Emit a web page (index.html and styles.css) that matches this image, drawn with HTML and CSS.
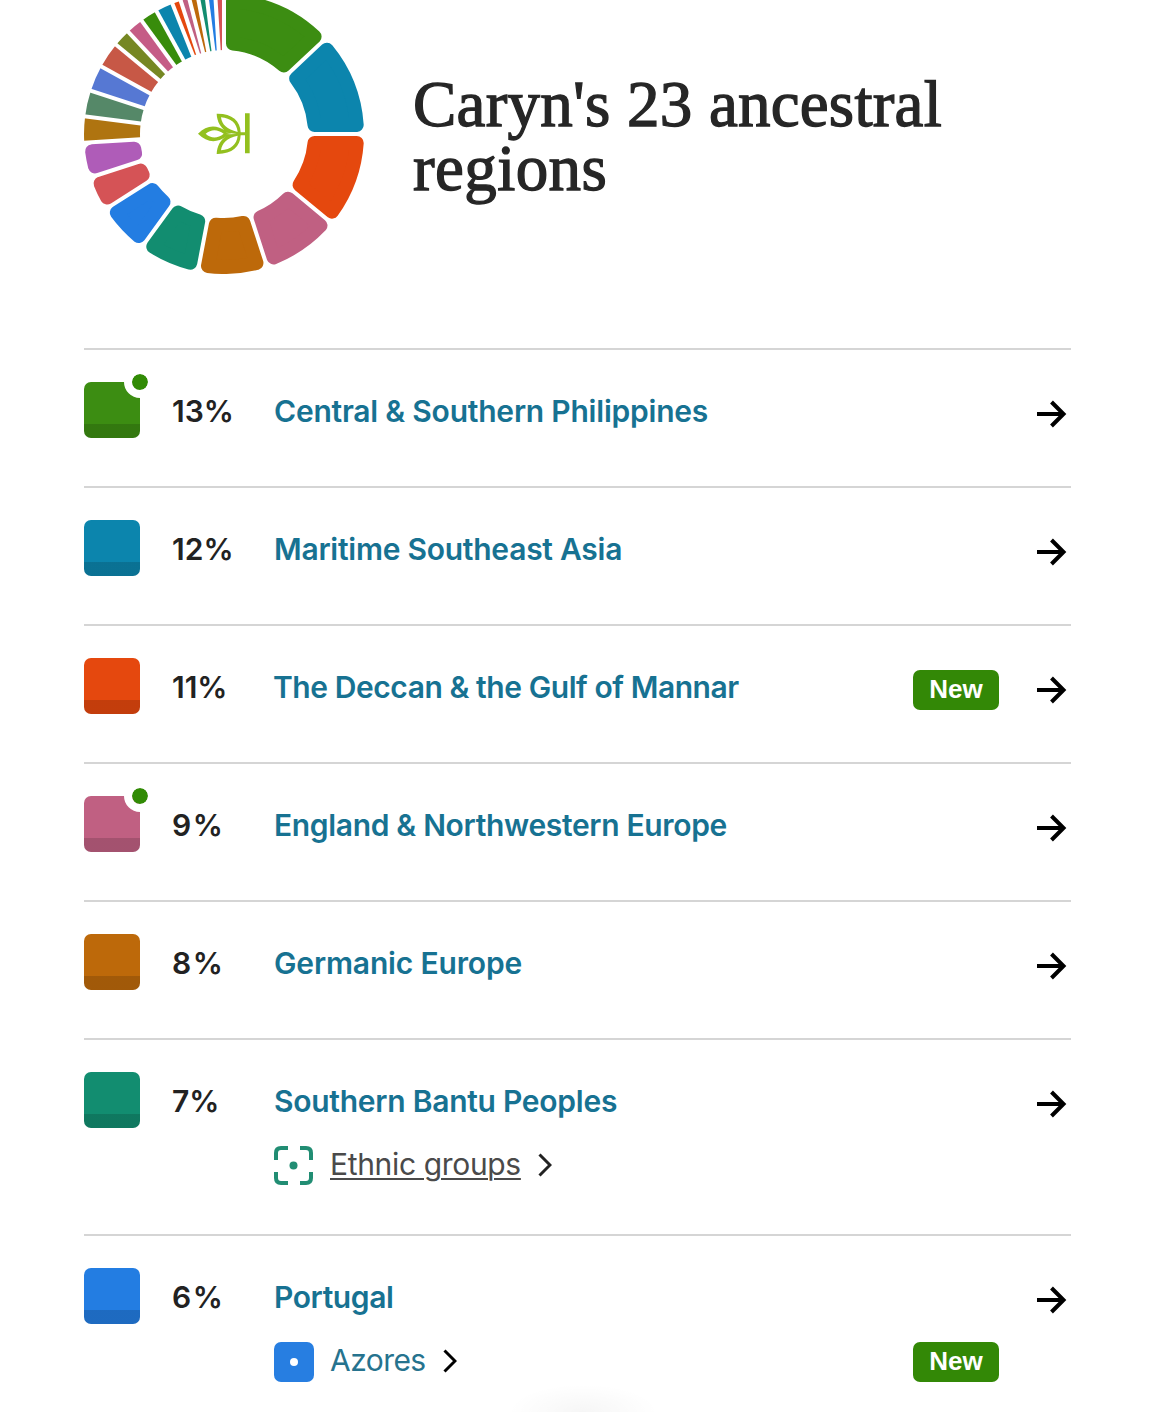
FILE: index.html
```html
<!DOCTYPE html>
<html lang="en">
<head>
<meta charset="utf-8">
<title>Caryn's ancestral regions</title>
<link rel="stylesheet" href="styles.css">
</head>
<body>
<svg class="defs" width="0" height="0" aria-hidden="true">
  <symbol id="arrow" viewBox="0 0 30 28"><path d="M0 14H27M14.500 2L26.500 14L14.500 26" fill="none" stroke="currentColor" stroke-width="4"/></symbol>
  <symbol id="chevron" viewBox="0 0 14 24"><path d="M1.500 1.500L12 12L1.500 22.500" fill="none" stroke="currentColor" stroke-width="3"/></symbol>
</svg>
<main class="page">
  <header class="hero">
    <svg class="donut" viewBox="-140 -140 280 280" role="img" aria-label="Region breakdown">
      <g class="slices" transform="rotate(-90)">
        <circle r="112" pathLength="100" stroke="#af7410" stroke-dasharray="3 97" stroke-dashoffset="-74"/>
        <circle r="112" pathLength="100" stroke="#558868" stroke-dasharray="3 97" stroke-dashoffset="-77"/>
        <circle r="112" pathLength="100" stroke="#5678d3" stroke-dasharray="3 97" stroke-dashoffset="-80"/>
        <circle r="112" pathLength="100" stroke="#c75846" stroke-dasharray="3 97" stroke-dashoffset="-83"/>
        <circle r="112" pathLength="100" stroke="#768723" stroke-dasharray="2 98" stroke-dashoffset="-86"/>
        <circle r="112" pathLength="100" stroke="#c55c86" stroke-dasharray="2 98" stroke-dashoffset="-88"/>
        <circle r="112" pathLength="100" stroke="#388c0b" stroke-dasharray="2 98" stroke-dashoffset="-90"/>
        <circle r="112" pathLength="100" stroke="#0c85ad" stroke-dasharray="2 98" stroke-dashoffset="-92"/>
        <circle r="112" pathLength="100" stroke="#e5480e" stroke-dasharray="1 99" stroke-dashoffset="-94"/>
        <circle r="112" pathLength="100" stroke="#c06082" stroke-dasharray="1 99" stroke-dashoffset="-95"/>
        <circle r="112" pathLength="100" stroke="#bd690a" stroke-dasharray="1 99" stroke-dashoffset="-96"/>
        <circle r="112" pathLength="100" stroke="#128d70" stroke-dasharray="1 99" stroke-dashoffset="-97"/>
        <circle r="112" pathLength="100" stroke="#237de2" stroke-dasharray="1 99" stroke-dashoffset="-98"/>
        <circle r="112" pathLength="100" stroke="#d55356" stroke-dasharray="1 99" stroke-dashoffset="-99"/>
      </g>
      <g class="gaps">
        <path d="M0-80V-142" transform="rotate(266.4)"/><path d="M0-80V-142" transform="rotate(277.2)"/>
        <path d="M0-80V-142" transform="rotate(288)"/><path d="M0-80V-142" transform="rotate(298.8)"/>
        <path d="M0-80V-142" transform="rotate(309.6)"/><path d="M0-80V-142" transform="rotate(316.8)"/>
        <path d="M0-80V-142" transform="rotate(324)"/><path d="M0-80V-142" transform="rotate(331.2)"/>
        <path d="M0-80V-142" transform="rotate(338.4)"/><path d="M0-80V-142" transform="rotate(342)"/>
        <path d="M0-80V-142" transform="rotate(345.6)"/><path d="M0-80V-142" transform="rotate(349.2)"/>
        <path d="M0-80V-142" transform="rotate(352.8)"/><path d="M0-80V-142" transform="rotate(356.4)"/>
        <path d="M0-80V-142"/>
      </g>
      <g class="wedges">
        <path color="#3c8d12" d="M9-132.700A133 133 0 0 1 90.580-97.390L59.850-68.540A91 91 0 0 0 9-90.550Z"/>
        <path color="#0c85ad" transform="rotate(46.8)" d="M9-132.700A133 133 0 0 1 84.270-102.900L55.420-72.170A91 91 0 0 0 9-90.550Z"/>
        <path color="#e5480e" transform="rotate(90)" d="M9-132.700A133 133 0 0 1 77.650-107.990L50.790-75.510A91 91 0 0 0 9-90.550Z"/>
        <path color="#c06082" transform="rotate(129.6)" d="M9-132.700A133 133 0 0 1 63.500-116.860L40.920-81.270A91 91 0 0 0 9-90.550Z"/>
        <path color="#bd690a" transform="rotate(162)" d="M9-132.700A133 133 0 0 1 56.040-120.620L35.740-83.690A91 91 0 0 0 9-90.550Z"/>
        <path color="#128d70" transform="rotate(190.8)" d="M9-132.700A133 133 0 0 1 48.360-123.900L30.420-85.760A91 91 0 0 0 9-90.550Z"/>
        <path color="#237de2" transform="rotate(216)" d="M9-132.700A133 133 0 0 1 40.480-126.690L24.960-87.500A91 91 0 0 0 9-90.550Z"/>
        <path color="#d55356" transform="rotate(237.6)" d="M9-132.700A133 133 0 0 1 24.280-130.770L13.800-89.950A91 91 0 0 0 9-90.550Z"/>
        <path color="#af5cb8" transform="rotate(252)" d="M9-132.700A133 133 0 0 1 24.280-130.770L13.800-89.950A91 91 0 0 0 9-90.550Z"/>
      </g>
      <g transform="translate(-34 -34) scale(.33333)" fill="#93c01f" fill-rule="evenodd">
        <path d="M165 40H179V160H165V106H152C151 140 126 163 80 162C81 138 92 119 109 109C78 132 50 127 24 101C50 75 78 73 109 94C92 83 81 65 80 41C126 40 151 62 152 97H165ZM47 101C63 116 83 116 101 101C83 87 63 87 47 101ZM93 52C96 74 110 88 143 96C140 69 123 55 93 52ZM93 151C96 130 110 113 143 107C140 134 123 148 93 151ZM106 98L124 101L106 104L118 103L140 102L118 99Z"/>
      </g>
    </svg>
    <h1 class="title"><span class="line first">Caryn's 23 ancestral</span> <span class="line">regions</span></h1>
  </header>

  <ul class="regions">
    <li class="region">
      <span class="swatch green notify"></span><span class="pct two">13%</span>
      <div class="info"><a class="name n1">Central &amp; Southern Philippines</a></div>
      <svg class="arrow"><use href="#arrow"/></svg>
    </li>
    <li class="region">
      <span class="swatch teal"></span><span class="pct two">12%</span>
      <div class="info"><a class="name n2">Maritime Southeast Asia</a></div>
      <svg class="arrow"><use href="#arrow"/></svg>
    </li>
    <li class="region">
      <span class="swatch orange"></span><span class="pct two">11%</span>
      <div class="info"><a class="name n3">The Deccan &amp; the Gulf of Mannar</a></div>
      <span class="badge">New</span>
      <svg class="arrow"><use href="#arrow"/></svg>
    </li>
    <li class="region">
      <span class="swatch pink notify"></span><span class="pct">9%</span>
      <div class="info"><a class="name n4">England &amp; Northwestern Europe</a></div>
      <svg class="arrow"><use href="#arrow"/></svg>
    </li>
    <li class="region">
      <span class="swatch brown"></span><span class="pct">8%</span>
      <div class="info"><a class="name n5">Germanic Europe</a></div>
      <svg class="arrow"><use href="#arrow"/></svg>
    </li>
    <li class="region tall">
      <span class="swatch jade"></span><span class="pct two">7%</span>
      <div class="info">
        <a class="name n6">Southern Bantu Peoples</a>
        <div class="sub">
          <svg class="sub-icon" viewBox="0 0 40 40"><g fill="none" stroke="#218d73" stroke-width="4"><path d="M2 14V7Q2 2 7 2H14M26 2H32Q37 2 37 7V14M37 26V32Q37 37 32 37H26M14 37H7Q2 37 2 32V26"/></g><circle cx="19.500" cy="19.500" r="4" fill="#218d73"/></svg>
          <a class="sub-name ethnic">Ethnic groups</a>
          <svg class="chevron dark"><use href="#chevron"/></svg>
        </div>
      </div>
      <svg class="arrow"><use href="#arrow"/></svg>
    </li>
    <li class="region tall">
      <span class="swatch blue"></span><span class="pct">6%</span>
      <div class="info">
        <a class="name n7">Portugal</a>
        <div class="sub">
          <svg class="sub-icon" viewBox="0 0 40 40"><rect width="40" height="40" rx="7" fill="#277ee1"/><circle cx="20" cy="20" r="4" fill="#fff"/></svg>
          <a class="sub-name azores">Azores</a>
          <svg class="chevron"><use href="#chevron"/></svg>
          <span class="badge sub-badge">New</span>
        </div>
      </div>
      <svg class="arrow"><use href="#arrow"/></svg>
    </li>
  </ul>
  <div class="shade"></div>
</main>
</body>
</html>
```
FILE: styles.css
```css
*, *::after { box-sizing: border-box; }
body { margin: 0; background: #fff; font-family: Inter, "Liberation Sans", sans-serif; color: #222; }
.defs { position: absolute; }
.page { position: relative; width: 1160px; height: 1412px; padding: 0 89px 0 84px; overflow: hidden; }

.hero { display: flex; align-items: center; gap: 49px; height: 280px; margin-top: -6px; }
.donut { width: 280px; height: 280px; flex: none; }
.slices circle { fill: none; stroke-width: 56; }
.gaps path { stroke: #fff; stroke-width: 4; }
.wedges path { fill: currentColor; stroke: currentColor; stroke-width: 14; stroke-linejoin: round; }
.title { margin: 4px 0 0; font: 400 65px/64px "Liberation Serif", serif; color: #262626; -webkit-text-stroke: 1.3px #262626; }
.line { display: block; white-space: nowrap; letter-spacing: .4px; }
.first { letter-spacing: .23px; }

.regions { list-style: none; margin: 74px 0 0; padding: 0; }
.region { display: flex; align-items: flex-start; height: 138px; padding-top: 32px; border-top: 2px solid #d5d5d5; }
.region.tall { height: 196px; }
.swatch { position: relative; flex: none; width: 56px; height: 56px; border-radius: 7px; background: linear-gradient(to bottom, transparent 42px, rgba(0, 0, 0, .15) 42px) currentColor; }
.green { color: #3c8d12; }
.teal { color: #0c85ad; }
.orange { color: #e5480e; }
.pink { color: #c06082; }
.brown { color: #bd690a; }
.jade { color: #128d70; }
.blue { color: #237de2; }
.notify::after { content: ""; position: absolute; top: -16px; right: -16px; width: 32px; height: 32px; border: 8px solid #fff; border-radius: 50%; background: #318b05; background-clip: padding-box; }
.pct { width: 102px; margin-left: 32px; font-size: 30px; font-weight: 600; line-height: 40px; padding-top: 9px; letter-spacing: 1.500px; }
.pct.two { letter-spacing: 0; }
.info { flex: 1; padding-top: 9px; }
.name { display: block; width: max-content; font-size: 30px; font-weight: 600; line-height: 40px; color: #177292; }
.n1 { letter-spacing: -.22px; }
.n2 { letter-spacing: -.25px; }
.n3 { letter-spacing: -.43px; margin-left: -1px; }
.n4 { letter-spacing: -.33px; }
.n5 { letter-spacing: -.15px; }
.n6 { letter-spacing: -.26px; }
.n7 { letter-spacing: -.4px; }
.arrow { flex: none; width: 30px; height: 28px; margin: 18px 4px 0 38px; color: #000; }
.badge { width: 86px; height: 40px; margin-top: 12px; border-radius: 7px; background: #338806; color: #fff; font: 700 26px/39px "Liberation Sans", sans-serif; text-align: center; }
.sub { display: flex; align-items: center; height: 40px; margin-top: 25px; }
.sub-icon { width: 40px; height: 40px; margin-right: 16px; }
.sub-name { font-size: 30px; line-height: 40px; margin-top: -5px; color: #26738e; }
.ethnic { letter-spacing: -.34px; color: #4a4a4a; text-decoration: underline; text-decoration-thickness: 2px; text-underline-offset: 3px; }
.azores { letter-spacing: -.55px; }
.chevron { width: 14px; height: 24px; margin: -2px 0 0 17px; color: #000; }
.dark { color: #222; }
.sub-badge { margin: 0 0 0 auto; }
.shade { position: absolute; left: 508px; bottom: -28px; width: 150px; height: 56px; background: radial-gradient(closest-side, rgba(0, 0, 0, .035), transparent); }
```
